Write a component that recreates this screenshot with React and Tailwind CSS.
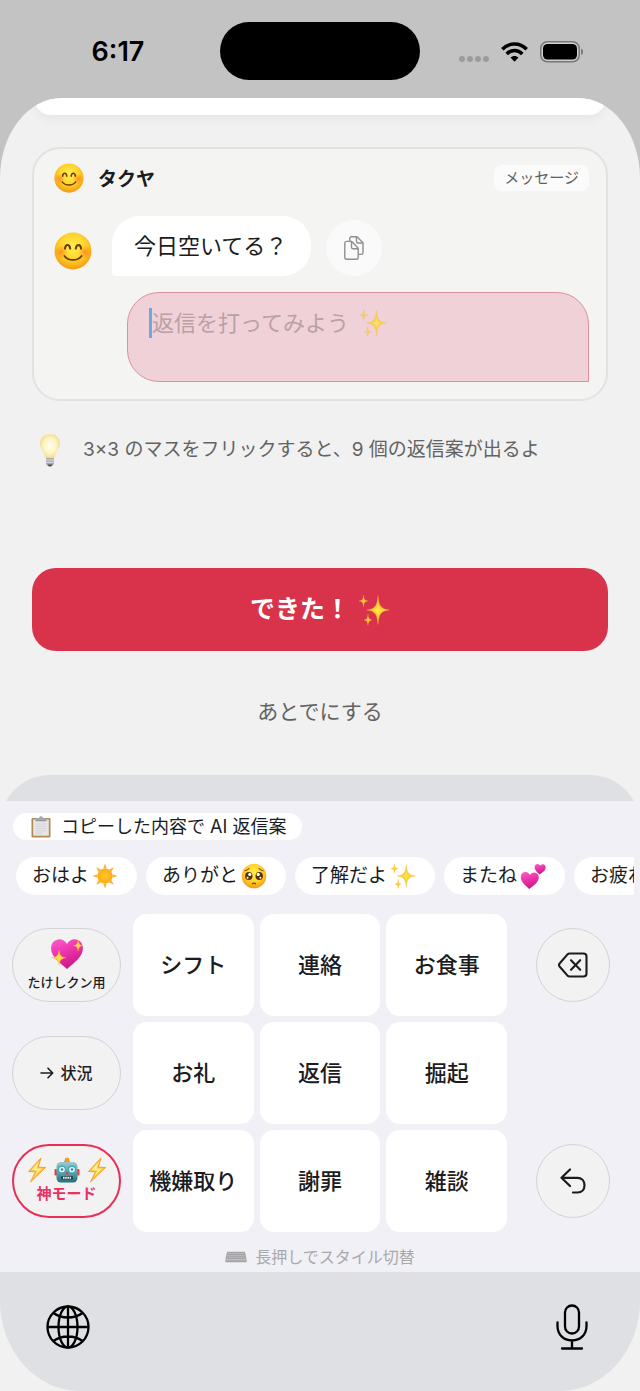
/**
 * Reply keyboard tutorial
 * Chat preview on top, 3x3 flick keyboard below
 */

const SmileEmoji = ({ className = '' }) => (
  <svg viewBox="0 0 40 40" className={className} aria-hidden="true">
    <defs>
      <radialGradient id="smileFace" cx="50%" cy="38%" r="62%">
        <stop offset="0" stopColor="#fff04f" />
        <stop offset="0.55" stopColor="#ffd42c" />
        <stop offset="1" stopColor="#f59a12" />
      </radialGradient>
      <radialGradient id="smileCheek">
        <stop offset="0" stopColor="#ff7a1c" stopOpacity="0.75" />
        <stop offset="1" stopColor="#ff7a1c" stopOpacity="0" />
      </radialGradient>
    </defs>
    <circle cx="20" cy="20" r="19.5" fill="url(#smileFace)" />
    <circle cx="7.5" cy="21" r="7" fill="url(#smileCheek)" />
    <circle cx="32.5" cy="21" r="7" fill="url(#smileCheek)" />
    <path d="M11.5 17.5c.6-5 4.800-5 5.600 0M22.900 17.500c.8-5 5-5 5.600 0" fill="none" stroke="#6b3a0a" strokeWidth="2.1" strokeLinecap="round" />
    <path d="M11 25.200c4.200 5.600 13.800 5.600 18 0" fill="none" stroke="#6b3a0a" strokeWidth="1.9" strokeLinecap="round" />
  </svg>
);

const SparklesEmoji = ({ className = '' }) => (
  <svg viewBox="0 0 32 32" className={className} aria-hidden="true">
    <g fill="#ffcf33" stroke="#f2a93b" strokeWidth="0.3">
      <path d="M20 1.500c.9 10 2.200 13.300 11.500 14.500-9.300 1.200-10.600 4.500-11.500 14.500-.9-10-2.200-13.300-11.500-14.500 9.300-1.200 10.600-4.500 11.500-14.500z" />
      <path d="M5.500 1c.4 4.300 1.100 5.600 4.500 6-3.400.4-4.100 1.700-4.500 6C5.100 8.700 4.400 7.400 1 7c3.400-.4 4.100-1.700 4.500-6z" />
      <path d="M10 20c.4 4.300 1.100 5.600 4 6-2.900.4-3.600 1.700-4 5.500-.4-3.800-1.100-5.100-4-5.500 2.900-.4 3.600-1.700 4-6z" />
    </g>
    <path d="M20 10c.6 4 1.500 5.400 5 6-3.500.6-4.400 2-5 6-.6-4-1.500-5.400-5-6 3.500-.6 4.400-2 5-6z" fill="#ffe84a" />
  </svg>
);

const BulbEmoji = ({ className = '' }) => (
  <svg viewBox="0 0 22 34" className={className} aria-hidden="true">
    <defs>
      <radialGradient id="bulbGlow" cx="50%" cy="48%" r="55%">
        <stop offset="0" stopColor="#fffef2" />
        <stop offset="0.55" stopColor="#fff6c4" />
        <stop offset="1" stopColor="#f3d888" />
      </radialGradient>
    </defs>
    <path d="M11 1C5 1 1 5.200 1 10.500c0 3.600 2 5.800 3.500 8.500 1.100 2 1.500 5 2.500 6h8c1-1 1.400-4 2.500-6 1.500-2.700 3.500-4.900 3.500-8.500C21 5.200 17 1 11 1z" fill="url(#bulbGlow)" />
    <path d="M7 25h8v5.500c0 1.500-2 3-4 3s-4-1.500-4-3z" fill="#a9a9a9" />
    <path d="M7 27h8M7 29.300h8" stroke="#e6e6e6" strokeWidth="0.9" />
    <path d="M8.500 31.500h5c-.4 1.300-1.400 2-2.500 2s-2.100-.7-2.500-2z" fill="#4b4b4b" />
  </svg>
);

const ClipboardEmoji = ({ className = '' }) => (
  <svg viewBox="0 0 20 22" className={className} aria-hidden="true">
    <rect x="0.5" y="2" width="19" height="19.500" rx="1.200" fill="#b28a55" />
    <rect x="2.200" y="3.500" width="15.600" height="16.200" fill="#e6e6e6" />
    <path d="M4.500 8h11M4.500 10.300h11M4.500 12.600h11M4.500 14.900h11M4.500 17.200h7" stroke="#cfcfcf" strokeWidth="0.8" />
    <path d="M4.500 4.800V3.200c0-.7.5-1 1.200-1H8C8.200.9 9 .3 10 .3s1.800.6 2 1.900h2.300c.7 0 1.200.3 1.200 1v1.600z" fill="#a3a8ae" />
    <path d="M4.500 4.800h11" stroke="#74797f" strokeWidth="0.7" />
  </svg>
);

const SunEmoji = ({ className = '' }) => (
  <svg viewBox="0 0 26 26" className={className} aria-hidden="true">
    <defs>
      <radialGradient id="sunDisc">
        <stop offset="0" stopColor="#ffc928" />
        <stop offset="1" stopColor="#fbab1b" />
      </radialGradient>
    </defs>
    <path
      d="M13 .5l1.800 5h-3.600zM13 25.500l1.800-5h-3.600zM.5 13l5-1.800v3.600zM25.500 13l-5-1.800v3.600zM4.200 4.200l4.800 2.300L6.500 9zM21.800 4.200L19.500 9 17 6.500zM4.200 21.800L6.500 17 9 19.500zM21.800 21.800L17 19.500l2.500-2.500z"
      fill="#f9b233"
    />
    <circle cx="13" cy="13" r="7.600" fill="url(#sunDisc)" />
  </svg>
);

const PleadingEmoji = ({ className = '' }) => (
  <svg viewBox="0 0 26 26" className={className} aria-hidden="true">
    <circle cx="13" cy="13" r="12.300" fill="url(#smileFace)" />
    <ellipse cx="7.800" cy="13" rx="3.700" ry="4" fill="#5c2f0a" />
    <ellipse cx="18.200" cy="13" rx="3.700" ry="4" fill="#5c2f0a" />
    <circle cx="8.800" cy="11.400" r="1.600" fill="#fff" />
    <circle cx="17.200" cy="11.400" r="1.600" fill="#fff" />
    <circle cx="6.600" cy="14.800" r="1" fill="#fff" />
    <circle cx="19.400" cy="14.800" r="1" fill="#fff" />
    <path d="M4 7.800c1.500-.3 3-1 4-2.300M22 7.800c-1.500-.3-3-1-4-2.300M11.300 21c.8-1.200 2.600-1.200 3.400 0" fill="none" stroke="#7a430d" strokeWidth="1.100" strokeLinecap="round" />
  </svg>
);

const HEART_PATH = 'M16 30C9 24 1 18.500 1 10.500 1 5.500 4.500 2 8.800 2c3 0 5.600 1.600 7.200 4.500C17.600 3.600 20.200 2 23.200 2 27.500 2 31 5.500 31 10.500 31 18.500 23 24 16 30z';

const HeartGradient = () => (
  <defs>
    <linearGradient id="pinkHeart" x1="0" y1="0" x2="0.4" y2="1">
      <stop offset="0" stopColor="#f766ca" />
      <stop offset="0.45" stopColor="#ee38b0" />
      <stop offset="1" stopColor="#cf1789" />
    </linearGradient>
  </defs>
);

const TwoHeartsEmoji = ({ className = '' }) => (
  <svg viewBox="0 0 26 26" className={className} aria-hidden="true">
    <HeartGradient />
    <path d={HEART_PATH} fill="url(#pinkHeart)" transform="translate(.5 7.500) rotate(3) scale(.6)" />
    <path d={HEART_PATH} fill="url(#pinkHeart)" transform="translate(14.500 0) rotate(4) scale(.37)" />
  </svg>
);

const SparklingHeartEmoji = ({ className = '' }) => (
  <svg viewBox="0 0 32 32" className={className} aria-hidden="true">
    <HeartGradient />
    <path d={HEART_PATH} fill="url(#pinkHeart)" />
    <path d="M8.500 12.500c.8 5 2 6.400 6.500 7-4.500.8-5.700 2.200-6.500 7-.8-4.800-2-6.200-7-7 5-.6 6.200-2 7-7z" fill="#ffd84b" stroke="#f5b32c" strokeWidth="0.4" />
    <path d="M26.500 3c.6 3.600 1.400 4.600 4.500 5-3.100.6-3.900 1.600-4.500 5-.6-3.400-1.400-4.400-4.500-5 3.100-.4 3.900-1.400 4.500-5z" fill="#ffd84b" stroke="#f5b32c" strokeWidth="0.4" />
  </svg>
);

const BoltEmoji = ({ className = '' }) => (
  <svg viewBox="0 0 20 26" className={className} aria-hidden="true">
    <path d="M14 1L1.500 14.500l7 .3L3.500 25 18.500 10.500l-7.300-.3z" fill="#ffc83a" stroke="#f09a25" strokeWidth="0.9" strokeLinejoin="round" />
    <path d="M12 4.500L4.800 13l5.700.2L7.500 19l7.500-7.300-5.600-.2z" fill="#fff0a0" />
  </svg>
);

const RobotEmoji = ({ className = '' }) => (
  <svg viewBox="0 0 26 26" className={className} aria-hidden="true">
    <defs>
      <linearGradient id="robotHead" x1="0" y1="0" x2="0" y2="1">
        <stop offset="0" stopColor="#9fc9c8" />
        <stop offset="0.55" stopColor="#5d9fa5" />
        <stop offset="1" stopColor="#18717c" />
      </linearGradient>
    </defs>
    <rect x="0.5" y="12" width="3" height="6.500" rx="1" fill="#e2413f" />
    <rect x="22.500" y="12" width="3" height="6.500" rx="1" fill="#e2413f" />
    <path d="M10 5.500h6l-.8-2.300h-4.400z" fill="#6b8c92" />
    <circle cx="13" cy="2.700" r="2.300" fill="#f0a02a" />
    <rect x="2.500" y="5" width="21" height="20.500" rx="4.500" fill="url(#robotHead)" />
    <circle cx="8" cy="12.500" r="3.400" fill="#e9fbff" stroke="#2aa7c9" strokeWidth="1.100" />
    <circle cx="18" cy="12.500" r="3.400" fill="#e9fbff" stroke="#2aa7c9" strokeWidth="1.100" />
    <circle cx="8" cy="12.500" r="1.300" fill="#4a7f88" />
    <circle cx="18" cy="12.500" r="1.300" fill="#4a7f88" />
    <path d="M13 14l2 3.400h-4z" fill="#e2413f" />
    <rect x="7" y="19" width="12" height="3.600" rx="1.200" fill="#24484e" />
    <path d="M9 20.800h8" stroke="#f2f2f2" strokeWidth="2" strokeDasharray="1.600 0.600" />
  </svg>
);

const KeyboardIcon = ({ className = '' }) => (
  <svg viewBox="0 0 22 12" className={className} aria-hidden="true">
    <path d="M2 .8h18l1.600 7.700v2.700H.4V8.500z" fill="#a5a5a8" />
    <path d="M2.800 2.500h16.400M2.400 4.400h17.200M2 6.300h18" stroke="#c6c6c9" strokeWidth="0.8" strokeDasharray="1.500 0.500" />
    <path d="M1.200 8.700h19.600" stroke="#d8d8db" strokeWidth="0.7" />
  </svg>
);

const CopyIcon = ({ className = '' }) => (
  <svg viewBox="0 0 20 24" className={className} fill="none" stroke="#8f8f8f" strokeWidth="1.400" strokeLinejoin="round" aria-hidden="true">
    <path d="M5.800 5V2.600c0-1 .7-1.800 1.700-1.800H13l6 6v9.800c0 1-.7 1.800-1.700 1.800h-2.800" />
    <path d="M12.500.8v4.700c0 .9.600 1.500 1.500 1.500h5" />
    <path d="M.8 7.200c0-1.100.7-1.800 1.700-1.800h5.300l6.400 6.800v9.200c0 1-.7 1.800-1.700 1.800h-10c-1 0-1.700-.8-1.700-1.800z" />
    <path d="M7.500 5.400v5.800c0 .9.600 1.500 1.500 1.500h5.200" />
  </svg>
);

const DeleteIcon = ({ className = '' }) => (
  <svg viewBox="0 0 30 26" className={className} fill="none" stroke="#1c1c1e" strokeWidth="2.100" strokeLinecap="round" strokeLinejoin="round" aria-hidden="true">
    <path d="M11.800 1.500h13.700c1.900 0 3 1.100 3 3v17c0 1.900-1.100 3-3 3H11.800c-1 0-1.800-.4-2.500-1.100L2 15c-1.300-1.300-1.300-2.700 0-4l7.300-8.400c.7-.7 1.500-1.100 2.500-1.100z" />
    <path d="M13 8.200l9.200 9.600M22.200 8.200L13 17.800" />
  </svg>
);

const UndoIcon = ({ className = '' }) => (
  <svg viewBox="0 0 26 26" className={className} fill="none" stroke="#1c1c1e" strokeWidth="2.200" strokeLinecap="round" strokeLinejoin="round" aria-hidden="true">
    <path d="M10 1.500L1.500 9.800 10 18M2 9.800h15.500c4.300 0 7 3.200 7 7.400s-2.700 7.300-7 7.300H13" />
  </svg>
);

const ArrowIcon = ({ className = '' }) => (
  <svg viewBox="0 0 14 12" className={className} fill="none" stroke="#1c1c1e" strokeWidth="1.600" strokeLinecap="round" strokeLinejoin="round" aria-hidden="true">
    <path d="M1 6h11.500M8 1.200L12.700 6 8 10.800" />
  </svg>
);

const GlobeIcon = ({ className = '' }) => (
  <svg viewBox="0 0 44 44" className={className} fill="none" stroke="#000" strokeWidth="2.300" aria-hidden="true">
    <circle cx="22" cy="22" r="20.500" />
    <ellipse cx="22" cy="22" rx="9.500" ry="20.500" />
    <path d="M22 1.500v41M1.500 22h41M7.500 8c7.800 6 21.200 6 29 0M7.500 36c7.800-6 21.200-6 29 0" />
  </svg>
);

const MicIcon = ({ className = '' }) => (
  <svg viewBox="0 0 32 46" className={className} fill="none" stroke="#000" strokeWidth="2.300" strokeLinecap="round" aria-hidden="true">
    <rect x="9" y="1.500" width="14" height="28" rx="7" />
    <path d="M1.500 18.500V22c0 8.500 6 14.500 14.500 14.500S30.500 30.500 30.500 22v-3.500M16 36.500v8M6 44.500h20" />
  </svg>
);

const WifiIcon = ({ className = '' }) => (
  <svg viewBox="0 0 27 20" className={className} fill="none" stroke="#000" strokeWidth="3.600" aria-hidden="true">
    <path d="M1.300 7.300c6.900-7 17.500-7 24.400 0" />
    <path d="M5.700 11.900c4.500-4.500 11.100-4.500 15.600 0" />
    <path d="M13.500 19.700l-4-4.200c2.200-2.100 5.800-2.100 8 0z" fill="#000" stroke="none" />
  </svg>
);

const BatteryIcon = ({ className = '' }) => (
  <svg viewBox="0 0 44 22" className={className} aria-hidden="true">
    <rect x="0.800" y="0.800" width="38.400" height="20" rx="6.500" fill="#cfcfcf" stroke="#777" strokeWidth="1.500" />
    <rect x="3" y="3" width="34" height="15.600" rx="4.500" fill="#000" />
    <path d="M41.200 7.500c2.400 1 2.400 5.600 0 6.600z" fill="#6f6f6f" />
  </svg>
);

const chips = [
  { label: 'おはよ', Emoji: SunEmoji },
  { label: 'ありがと', Emoji: PleadingEmoji },
  { label: '了解だよ', Emoji: SparklesEmoji },
  { label: 'またね', Emoji: TwoHeartsEmoji },
  { label: 'お疲れ', Emoji: SparklesEmoji },
];

const keyRows = [
  ['シフト', '連絡', 'お食事'],
  ['お礼', '返信', '掘起'],
  ['機嫌取り', '謝罪', '雑談'],
];

const StatusBar = () => (
  <header className="grid h-[98px] grid-cols-[1fr_200px_1fr] items-start pt-[22px]">
    <div className="flex h-[60px] items-center justify-center pl-4 text-[27px] font-semibold text-black">
      <time>6:17</time>
    </div>
    <div className="h-[58px] rounded-full bg-black" />
    <div className="flex h-[60px] items-center justify-end gap-3 pr-14">
      <div className="flex gap-0.5 pt-[14px]">
        {[0, 1, 2, 3].map((dot) => (
          <span key={dot} className="h-[6px] w-[6px] rounded-sm bg-[#9c9c9c]" />
        ))}
      </div>
      <WifiIcon className="h-5 w-[27px]" />
      <BatteryIcon className="h-[22px] w-11" />
    </div>
  </header>
);

const ChatCard = () => (
  <section className="mx-8 mt-8 rounded-[28px] border-2 border-[#e2e2e2] bg-[#f4f4f3] pt-[14px] pr-[17px] pb-[17px] pl-5">
    <div className="flex h-[30px] items-center">
      <SmileEmoji className="h-[30px] w-[30px]" />
      <h1 className="ml-[14px] pt-1 text-[19px] font-bold text-[#1c1c1e]">タクヤ</h1>
      <span className="ml-auto rounded-lg bg-[#fbfbfb] px-[10px] text-[15px] leading-[26px] text-[#606060]">メッセージ</span>
    </div>

    <div className="mt-[23px] flex items-end">
      <SmileEmoji className="mb-[6px] h-[38px] w-[38px]" />
      <p className="ml-5 rounded-[28px] rounded-bl-[4px] bg-white pr-6 pl-[22px] text-[22px] leading-[60px] text-[#1c1c1e]">
        今日空いてる？
      </p>
      <button type="button" aria-label="コピー" className="ml-[15px] flex h-14 w-14 items-center justify-center rounded-full bg-[#fafafa]">
        <CopyIcon className="h-6 w-5" />
      </button>
    </div>

    <div className="relative mt-4 ml-[73px]">
      <textarea
        aria-label="返信"
        className="block h-[90px] w-full resize-none rounded-[32px] rounded-br-none border border-[#e08fa3] bg-[#efd1d7] px-5 py-4 text-[22px] leading-[28px] text-[#1c1c1e] outline-none"
      />
      {/* Placeholder sits over the empty text box */}
      <div className="pointer-events-none absolute top-4 left-[22px] flex h-[30px] items-center text-[22px] text-[#b9a1a6]">
        <span className="h-[30px] w-[3px] bg-[#6fa8e0]" />
        返信を打ってみよう
        <SparklesEmoji className="ml-[10px] h-7 w-7 opacity-80" />
      </div>
    </div>
  </section>
);

const SideKey = ({ children, label, className = 'border border-[#d3d3d5]' }) => (
  <button
    type="button"
    aria-label={label}
    className={`flex h-[74px] w-[109px] flex-col items-center justify-center self-center rounded-full bg-[#f2f2f2] text-[#1c1c1e] ${className}`}
  >
    {children}
  </button>
);

const RoundKey = ({ children, label }) => (
  <button
    type="button"
    aria-label={label}
    className="flex h-[74px] w-[74px] items-center justify-center self-center justify-self-center rounded-full border border-[#d3d3d5] bg-[#f2f2f2]"
  >
    {children}
  </button>
);

const FlickKey = ({ label }) => (
  <button type="button" className="rounded-[14px] bg-white text-[22px] font-medium text-[#1c1c1e]">
    {label}
  </button>
);

const Keyboard = () => (
  <section className="mt-[42px] rounded-t-[50px] rounded-b-[80px_90px] bg-[#dee0e4] pt-[26px]">
    <div className="bg-[#f1f0f6] pt-3">
      <button
        type="button"
        className="ml-[13px] flex h-[27px] items-center rounded-full bg-white pr-4 pl-[18px] text-[18px] text-[#1c1c1e]"
      >
        <ClipboardEmoji className="mr-[10px] h-[22px] w-5" />
        コピーした内容で AI 返信案
      </button>

      <div className="mt-[17px] mr-[6px] flex gap-[9px] overflow-hidden pl-4">
        {chips.map(({ label, Emoji }) => (
          <button
            key={label}
            type="button"
            className="flex h-[38px] shrink-0 items-center rounded-full bg-white px-4 text-[19px] text-[#1c1c1e]"
          >
            {label}
            <Emoji className="mx-[3px] h-[26px] w-[26px]" />
          </button>
        ))}
      </div>

      <div className="mt-[19px] grid grid-cols-[115px_1fr_1fr_1fr_121px] grid-rows-[102px_102px_102px] gap-[6px] pr-[6px] pl-3">
        <SideKey>
          <SparklingHeartEmoji className="h-[34px] w-[34px]" />
          <span className="text-[13px] leading-[22px] font-medium">たけしクン用</span>
        </SideKey>
        {keyRows[0].map((label) => <FlickKey key={label} label={label} />)}
        <RoundKey label="削除">
          <DeleteIcon className="h-[26px] w-[30px]" />
        </RoundKey>

        <SideKey>
          <span className="flex items-center gap-[6px] text-[16px] font-medium">
            <ArrowIcon className="h-3 w-[14px]" />
            状況
          </span>
        </SideKey>
        {keyRows[1].map((label) => <FlickKey key={label} label={label} />)}
        <div />

        <SideKey className="border-2 border-[#e92f58]">
          <span className="flex items-center gap-[7px]">
            <BoltEmoji className="h-[26px] w-5" />
            <RobotEmoji className="h-[26px] w-[26px]" />
            <BoltEmoji className="h-[26px] w-5" />
          </span>
          <span className="text-[15px] leading-[22px] font-bold text-[#e93163]">神モード</span>
        </SideKey>
        {keyRows[2].map((label) => <FlickKey key={label} label={label} />)}
        <RoundKey label="取り消す">
          <UndoIcon className="h-[26px] w-[26px]" />
        </RoundKey>
      </div>

      <p className="flex h-10 items-center justify-center gap-2 pt-[10px] text-[16px] text-[#a9a9ac]">
        <KeyboardIcon className="h-3 w-[22px]" />
        長押しでスタイル切替
      </p>
    </div>

    <div className="flex h-[119px] items-start justify-between pt-8 pr-[52px] pl-[46px]">
      <button type="button" aria-label="次のキーボード" className="pt-px">
        <GlobeIcon className="h-11 w-11" />
      </button>
      <button type="button" aria-label="音声入力">
        <MicIcon className="h-[46px] w-8" />
      </button>
    </div>
  </section>
);

const App = () => (
  <div className="bg-[#c3c3c3] font-[Inter,'Noto_Sans_CJK_JP',sans-serif]">
    <StatusBar />
    <main className="overflow-hidden rounded-t-[62px_80px] bg-[#f1f1f1]">
      <div className="mx-[34px] h-[17px] rounded-b-[17px] bg-white shadow-[0_4px_12px_rgba(0,0,0,0.05)]" />
      <ChatCard />

      <p className="mx-8 mt-8 flex h-8 items-center pt-0.5 text-[19px] text-[#636363]">
        <BulbEmoji className="mr-[22px] ml-[7px] h-[34px] w-[22px]" />
        3×3 のマスをフリックすると、9 個の返信案が出るよ
      </p>

      <div className="mx-8 mt-[103px] flex flex-col">
        <button
          type="button"
          className="flex h-[83px] items-center justify-center rounded-3xl bg-[#d9334c] text-[25px] font-bold text-white"
        >
          できた！
          <SparklesEmoji className="ml-2 h-8 w-8" />
        </button>
        <button type="button" className="mt-10 h-[42px] self-center text-[21px] text-[#636363]">
          あとでにする
        </button>
      </div>

      <Keyboard />
    </main>
  </div>
);

export default App;
